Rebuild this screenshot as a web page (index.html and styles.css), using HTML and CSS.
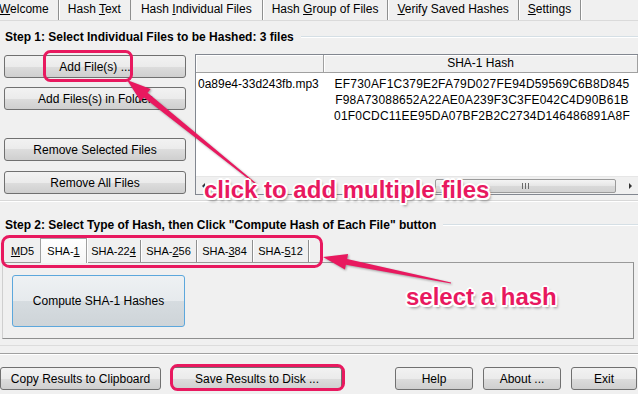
FILE: index.html
```html
<!DOCTYPE html>
<html lang="en">
<head>
  <meta charset="UTF-8" />
  <title>Hash Individual Files</title>
  <link rel="stylesheet" href="styles.css">
</head>
<body>
  <div class="window">
    <nav class="tabs">
      <div class="tab first"><u>W</u>elcome</div>
      <div class="tab">Hash <u>T</u>ext</div>
      <div class="tab active">Hash <u>I</u>ndividual Files</div>
      <div class="tab">Hash <u>G</u>roup of Files</div>
      <div class="tab"><u>V</u>erify Saved Hashes</div>
      <div class="tab"><u>S</u>ettings</div>
    </nav>

    <div class="legend">Step 1: Select Individual Files to be Hashed: 3 files</div>
    <div class="files">
      <div class="file-buttons">
        <button class="btn">Add File(s) ...</button>
        <button class="btn gap-9">Add Files(s) in Folder</button>
        <button class="btn gap-28">Remove Selected Files</button>
        <button class="btn gap-10">Remove All Files</button>
      </div>
      <div class="file-table">
        <div class="thead">
          <div class="th col-name"></div>
          <div class="th col-hash">SHA-1 Hash</div>
        </div>
        <div class="tbody">
          <div class="col-name cell-name">0a89e4-33d243fb.mp3</div>
          <div class="col-hash cell-hash">
            EF730AF1C379E2FA79D027FE94D59569C6B8D845<br>
            F98A73088652A22AE0A239F3C3FE042C4D90B61B<br>
            01F0CDC11EE95DA07BF2B2C2734D146486891A8F
          </div>
        </div>
        <div class="hscroll">
          <div class="scroll-btn"><span class="tri-left"></span></div>
          <div class="track"><div class="thumb"><span class="grip"></span></div></div>
          <div class="scroll-btn"><span class="tri-right"></span></div>
        </div>
      </div>
    </div>
    <div class="rule"></div>

    <div class="legend step-two">Step 2: Select Type of Hash, then Click "Compute Hash of Each File" button</div>
    <div class="hash-tabs">
      <div class="hash-tab narrow"><u>M</u>D5</div>
      <div class="hash-tab active">SHA-<u>1</u></div>
      <div class="hash-tab mid">SHA-22<u>4</u></div>
      <div class="hash-tab">SHA-<u>2</u>56</div>
      <div class="hash-tab">SHA-<u>3</u>84</div>
      <div class="hash-tab">SHA-<u>5</u>12</div>
    </div>
    <div class="hash-panel">
      <button class="btn btn-compute">Compute SHA-1 Hashes</button>
    </div>
    <div class="group-end"></div>
    <div class="separator"></div>

    <div class="footer">
      <button class="btn btn-copy">Copy Results to Clipboard</button>
      <button class="btn btn-save">Save Results to Disk ...</button>
      <button class="btn btn-help">Help</button>
      <button class="btn btn-about">About ...</button>
      <button class="btn btn-exit">Exit</button>
    </div>
  </div>

  <!-- annotation layer drawn over the screenshot -->
  <svg class="overlay" width="638" height="394" viewBox="0 0 638 394">
    <g fill="none" stroke="#e8195f" stroke-width="3">
      <rect x="44.5" y="51.5" width="87" height="29" rx="6" />
      <rect x="2.5" y="236.5" width="319" height="30" rx="7" />
      <rect x="171.5" y="365.5" width="172" height="24" rx="6" />
    </g>
    <g fill="#e8195f" class="arrows">
      <polygon points="127,80 150.7,88.9 147.6,92.8 256.4,183.5 255.6,184.5 143.8,97.4 140.7,101.3" />
      <polygon points="323,257 348.1,253.9 347.1,258.9 451.1,282.4 450.9,283.6 345.9,264.7 344.9,269.6" />
    </g>
  </svg>
  <div class="callout callout-add">click to add multiple files</div>
  <div class="callout callout-hash">select a hash</div>
</body>
</html>
```

FILE: styles.css
```css
* {
  margin: 0;
  padding: 0;
  box-sizing: border-box;
}
html, body {
  width: 100%;
  height: 100%;
  overflow: hidden;
}
body {
  font-family: "Liberation Sans", Arial, sans-serif;
  font-size: 12px;
  color: #000;
  background: #f0f0f0;
  position: relative;
}
.window {
  display: flex;
  flex-direction: column;
  width: 638px;
  height: 394px;
}

/* top tab strip */
.tabs {
  display: flex;
  height: 21px;
  border-bottom: 1px solid #dadada;
}
.tab {
  padding: 0 9px;
  line-height: 19px;
  white-space: nowrap;
  border-right: 1px solid #8e8f8f;
  box-shadow: 1px 0 0 #fff;
}
.tab.first {
  margin-left: -10px;
}
.tab.active {
  background: #f3f3f3;
  padding: 0 10px;
}

/* group headings */
.legend {
  display: flex;
  align-items: center;
  gap: 7px;
  height: 14px;
  margin: 9px 0 0 5px;
  font-weight: bold;
  white-space: nowrap;
}
.legend::after {
  content: "";
  flex: 1;
  border-top: 1px solid #d5dfe5;
  border-bottom: 1px solid #fff;
}
.legend.step-two {
  margin-top: 16px;
}

/* buttons */
.btn {
  font-family: inherit;
  font-size: 12px;
  color: #000;
  height: 23px;
  border: 1px solid #707070;
  border-radius: 3px;
  background: linear-gradient(#f2f2f2, #ebebeb 50%, #dddddd 50%, #cfcfcf);
  cursor: pointer;
}

/* step 1 */
.files {
  display: flex;
  height: 141px;
  margin-top: 10px;
}
.file-buttons {
  display: flex;
  flex-direction: column;
  width: 195px;
  padding: 1px 0 0 4px;
}
.file-buttons .btn {
  width: 182px;
}
.gap-9 { margin-top: 9px; }
.gap-28 { margin-top: 28px; }
.gap-10 { margin-top: 10px; }

.file-table {
  flex: 1;
  display: flex;
  flex-direction: column;
  background: #fff;
  border: 1px solid #828790;
  border-right: none;
}
.thead {
  display: flex;
  height: 18px;
  background: #f0f0f0;
  border-bottom: 1px solid #a0a0a0;
}
.th {
  line-height: 17px;
  text-align: center;
  border-right: 1px solid #a0a0a0;
  box-shadow: inset 1px 1px 0 #fff;
}
.col-name {
  width: 128px;
}
.col-hash {
  flex: 1;
}
.tbody {
  flex: 1;
  display: flex;
  padding-top: 3px;
  line-height: 16px;
}
.cell-name {
  padding-left: 2px;
  white-space: nowrap;
}
.cell-hash {
  text-align: center;
  padding-left: 2px;
  letter-spacing: 0.2px;
  white-space: nowrap;
}

.hscroll {
  display: flex;
  align-items: center;
  height: 18px;
  background: #f0f0f0;
  border-top: 1px solid #e6e6e6;
}
.scroll-btn {
  width: 15px;
  height: 17px;
  display: flex;
  align-items: center;
  justify-content: center;
}
.tri-left {
  border-top: 3px solid transparent;
  border-bottom: 3px solid transparent;
  border-right: 3px solid #333;
}
.tri-right {
  border-top: 3px solid transparent;
  border-bottom: 3px solid transparent;
  border-left: 3px solid #333;
}
.track {
  flex: 1;
  display: flex;
  align-items: center;
  height: 17px;
}
.thumb {
  width: 181px;
  height: 14px;
  margin-left: 224px;
  border: 1px solid #9a9a9a;
  border-radius: 2px;
  background: linear-gradient(#f4f4f4, #e6e6e6 50%, #d9d9d9 50%, #d2d2d2);
  display: flex;
  align-items: center;
  justify-content: center;
}
.grip {
  width: 7px;
  height: 6px;
  background: repeating-linear-gradient(90deg, #6a6a6a 0 1px, transparent 1px 3px);
}

.rule {
  height: 2px;
  margin-top: 5px;
  border-top: 1px solid #d8d8d8;
  border-bottom: 1px solid #fff;
}

/* step 2 */
.hash-tabs {
  display: flex;
  height: 22px;
  margin: 8px 0 0 5px;
}
.hash-tab {
  width: 56px;
  font-size: 11px;
  line-height: 22px;
  text-align: center;
  white-space: nowrap;
  border-right: 1px solid #8e8f8f;
  box-shadow: 1px 0 0 #fff;
}
.hash-tab.narrow {
  width: 35px;
  border-right: none;
  box-shadow: none;
}
.hash-tab.mid {
  width: 54px;
}
.hash-tab.active {
  position: relative;
  z-index: 1;
  width: 47px;
  margin-top: -2px;
  line-height: 24px;
  height: 25px;
  background: linear-gradient(#ffffff, #f6f6f6);
  border: 1px solid #a0a0a0;
  border-bottom: none;
}
.hash-panel {
  height: 77px;
  margin: 0 4px 0 2px;
  padding: 12px 0 0 9px;
  border: 1px solid #8e8f8f;
  border-left-color: #cfcfcf;
  border-top-color: #9a9a9a;
}
.btn-compute {
  width: 173px;
  height: 52px;
  border-color: #5ca7dc;
  background: linear-gradient(#eef1f3, #e6eaed 50%, #d6dce0 50%, #ced4d8);
}
.group-end {
  height: 1px;
  margin-top: 6px;
  background: #dcdcdc;
}
.separator {
  height: 2px;
  margin-top: 7px;
  border-top: 1px solid #a0a0a0;
  border-bottom: 1px solid #fff;
}

/* bottom row */
.footer {
  display: flex;
  margin-top: 12px;
}
.btn-copy { width: 161px; }
.btn-save { width: 170px; margin-left: 11px; }
.btn-help { width: 78px; margin-left: 53px; }
.btn-about { width: 78px; margin-left: 10px; }
.btn-exit { width: 66px; margin-left: 10px; }

/* annotations */
.overlay {
  position: absolute;
  top: 0;
  left: 0;
  pointer-events: none;
}
.arrows {
  filter: drop-shadow(1px 1px 1px rgba(0, 0, 0, 0.35));
}
.callout {
  position: absolute;
  font-family: "Liberation Sans", Arial, sans-serif;
  font-size: 24px;
  font-weight: bold;
  line-height: 24px;
  color: #e8195f;
  white-space: nowrap;
  text-shadow:
    -2px 0 0 #fff, 2px 0 0 #fff, 0 -2px 0 #fff, 0 2px 0 #fff,
    -1.5px -1.5px 0 #fff, 1.5px -1.5px 0 #fff, -1.5px 1.5px 0 #fff, 1.5px 1.5px 0 #fff,
    2px 3px 3px rgba(0, 0, 0, 0.45);
}
.callout-add {
  top: 178px;
  left: 204px;
}
.callout-hash {
  top: 285px;
  left: 406px;
}
```
